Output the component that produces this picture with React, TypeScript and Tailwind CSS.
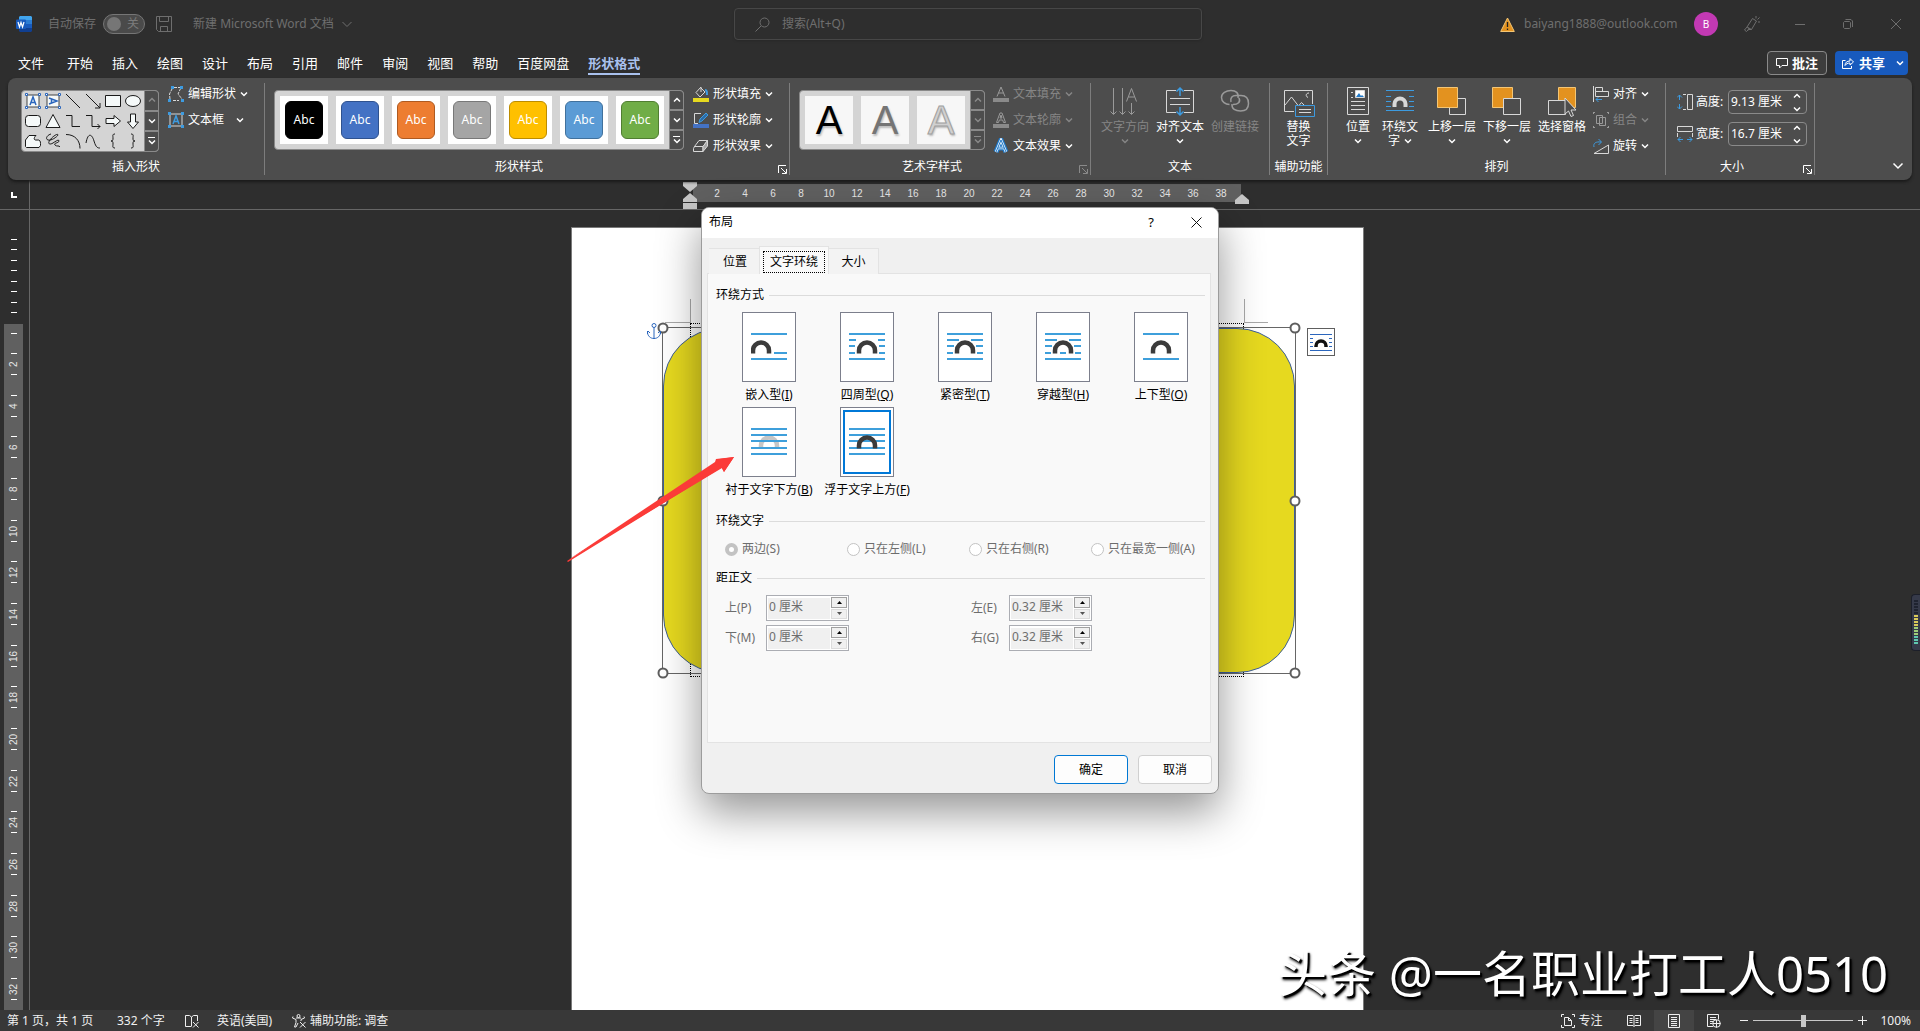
import type { ReactNode } from 'react';

const tabs = ['文件', '开始', '插入', '绘图', '设计', '布局', '引用', '邮件', '审阅', '视图', '帮助', '百度网盘', '形状格式'];

const styleColors = [
  'bg-black border-black',
  'bg-[#4472c4] border-[#2f528f]',
  'bg-[#ed7d31] border-[#ae5a21]',
  'bg-[#a5a5a5] border-[#787878]',
  'bg-[#ffc000] border-[#bc8c00]',
  'bg-[#5b9bd5] border-[#41719c]',
  'bg-[#70ad47] border-[#507e32]',
];

const shapes: { name: string; d: string; blue?: boolean; fill?: boolean }[] = [
  { name: '文本框', d: 'M2 2h12v12H2z', blue: true },
  { name: '竖排文本框', d: 'M2 2h12v12H2z', blue: true },
  { name: '直线', d: 'M1 1l14 14' },
  { name: '箭头', d: 'M1 1l14 14M15 10v5h-5' },
  { name: '矩形', d: 'M.5 2.5h15v11H.5z', fill: true },
  { name: '椭圆', d: 'M.5 8a7.5 5.5 0 0 1 15 0a7.5 5.5 0 0 1-15 0z', fill: true },
  { name: '圆角矩形', d: 'M3.5 2.5h9a3 3 0 0 1 3 3v5a3 3 0 0 1-3 3h-9a3 3 0 0 1-3-3v-5a3 3 0 0 1 3-3z', fill: true },
  { name: '三角形', d: 'M8 1.5l7 13H1z', fill: true },
  { name: '肘形连接符', d: 'M1 2.5h6v11h8' },
  { name: '肘形箭头', d: 'M1 2.5h6v11h8M12.5 11l2.5 2.5-2.5 2.5' },
  { name: '右箭头', d: 'M1 5.5h8V2.5l6.5 5.5L9 13.5v-3H1z', fill: true },
  { name: '下箭头', d: 'M5.5 1v8H2.5l5.5 6.5L13.5 9h-3V1z', fill: true },
  { name: '任意多边形', d: 'M4 2.5h7c-3 3-2 5 1 4.5 3-.5 3.500 1.500 3.500 3.500v2l-1.500 2H1.500l-1-1V7z', fill: true },
  { name: '自由曲线', d: 'M6 1C2 2 0 6 3 7s9-3 10-5c0-2-5 1-8 5s0 5 3 3 6-4 6-2-6 2-4 4 4 0 5 2' },
  { name: '弧形', d: 'M1 1.5c9 0 14 6 14 14' },
  { name: '曲线', d: 'M1 10c2-11 6-9 8-2s4 7 6 7' },
  { name: '左大括号', d: 'M10 1C7 1 8 3 8 5s0 3-2 3c2 0 2 1 2 3s-1 4 2 4' },
  { name: '右大括号', d: 'M6 1c3 0 2 2 2 4s0 3 2 3c-2 0-2 1-2 3s1 4-2 4' },
];

const wrapStyles = [
  { label: '嵌入型', hotkey: 'I', lines: 'M0 1h36M23 20h13M0 26h36', archX: 0 },
  { label: '四周型', hotkey: 'Q', lines: 'M0 1h36M0 7h7M29 7h7M0 13h6M30 13h6M0 20h6M30 20h6M0 26h36', archX: 8 },
  { label: '紧密型', hotkey: 'T', lines: 'M0 1h36M0 7h12M24 7h12M0 13h7M29 13h7M0 20h6M30 20h6M0 26h36', archX: 8 },
  { label: '穿越型', hotkey: 'H', lines: 'M0 1h36M0 7h12M24 7h12M0 13h7M29 13h7M0 20h6M15 20h6M30 20h6M0 26h36', archX: 8 },
  { label: '上下型', hotkey: 'O', lines: 'M0 1h36M0 26h36', archX: 8 },
  { label: '衬于文字下方', hotkey: 'B', lines: 'M0 1h36M0 7h36M0 13h36M0 20h36M0 26h36', archX: 8, behind: true },
  { label: '浮于文字上方', hotkey: 'F', lines: 'M0 1h36M0 7h36M0 13h36M0 20h36M0 26h36', archX: 8, selected: true },
];

function Chevron({ className = '' }: { className?: string }) {
  return (
    <svg className={`h-2 w-2 shrink-0 ${className}`} viewBox="0 0 8 8" fill="none" stroke="currentColor" strokeWidth="1.5">
      <path d="M1 2.5l3 3 3-3" />
    </svg>
  );
}

interface GroupProps {
  label: string;
  width: string;
  pad?: string;
  launcher?: boolean;
  dim?: boolean;
  children: ReactNode;
}

function Group({ label, width, pad = '', launcher, dim, children }: GroupProps) {
  return (
    <section className={`flex shrink-0 flex-col border-r border-[#7d7d7d] ${width}`}>
      <div className={`flex h-[76px] ${pad}`}>{children}</div>
      <div className="flex h-4 items-center">
        <h2 className="flex-1 whitespace-nowrap text-center leading-4">{label}</h2>
        {launcher && (
          <button aria-label={`${label}设置`} className={`flex w-4 justify-end pr-0.5 ${dim ? 'text-[#8a8a8a]' : 'text-white'}`}>
            <svg className="mt-1 h-[9px] w-[9px]" viewBox="0 0 9 9" fill="none" stroke="currentColor">
              <path d="M.5 8V.5H8M3 3l5 5M8.500 4v4.500H4" />
            </svg>
          </button>
        )}
      </div>
    </section>
  );
}

function Command({ label, icon, dim, wide }: { label: string; icon: ReactNode; dim?: boolean; wide?: boolean }) {
  return (
    <button className={`flex h-[22px] items-center gap-1 whitespace-nowrap ${dim ? 'text-[#868686]' : 'text-white'}`}>
      <svg className="h-4 w-4 shrink-0" viewBox="0 0 16 16" fill="none" stroke="#d8d8d8">
        {icon}
      </svg>
      <span>{label}</span>
      <Chevron className={wide ? 'ml-2' : ''} />
    </button>
  );
}

function BigButton({ lines, icon, dim, chevron, width = 'w-12' }: { lines: string[]; icon: ReactNode; dim?: boolean; chevron?: boolean; width?: string }) {
  return (
    <button className={`flex shrink-0 flex-col items-center pt-1 leading-[14px] ${width} ${dim ? 'text-[#868686]' : 'text-white'}`}>
      <svg className="mb-[3px] h-[30px] w-8" viewBox="0 0 32 30" fill="none" stroke="#d8d8d8">
        {icon}
      </svg>
      <span className="whitespace-nowrap">{lines[0]}</span>
      <span className="flex h-[14px] items-center gap-1">
        {lines[1]}
        {chevron && <Chevron />}
      </span>
    </button>
  );
}

function GalleryScroll({ dimUp, dimAll }: { dimUp?: boolean; dimAll?: boolean }) {
  const dim = 'text-[#8a8a8a]';
  return (
    <div className="flex w-[14px] shrink-0 flex-col divide-y-2 divide-[#8a8a8a] border-l border-[#8a8a8a] bg-[#4d4d4d]">
      <button aria-label="上一行" className={`flex flex-1 items-center justify-center ${dimUp || dimAll ? dim : 'text-white'}`}>
        <Chevron className="rotate-180" />
      </button>
      <button aria-label="下一行" className={`flex flex-1 items-center justify-center ${dimAll ? dim : 'text-white'}`}>
        <Chevron />
      </button>
      <button aria-label="其他" className={`flex flex-1 flex-col items-center justify-center ${dimAll ? dim : 'text-white'}`}>
        <span className="h-px w-[7px] bg-current" />
        <Chevron />
      </button>
    </div>
  );
}

function TitleBar() {
  return (
    <header className="flex h-12 items-center pl-4 text-[#6e6e6e]">
      <div className="flex flex-1 items-center">
        <svg className="h-4 w-4" viewBox="0 0 16 16">
          <path fill="#41a5ee" d="M4 0h11l1 1v3H3V1z" />
          <path fill="#2b7cd3" d="M3 4h13v4H3z" />
          <path fill="#185abd" d="M3 8h13v4H3z" />
          <path fill="#103f91" d="M3 12h13v3l-1 1H4l-1-1z" />
          <rect y="3.5" width="10" height="9.5" rx="1" fill="#185abd" />
          <path d="M2 6l1.500 5L5 6.500 6.500 11 8 6" fill="none" stroke="#fff" strokeWidth="1.2" />
        </svg>
        <span className="ml-4">自动保存</span>
        <button role="switch" aria-checked="false" className="ml-[7px] flex h-5 w-[42px] items-center justify-between rounded-full border border-[#767676] bg-[#4a4a4a] pr-[5px] pl-[3px]">
          <span className="h-3.5 w-3.5 rounded-full bg-[#767676]" />
          <span className="text-[#7c7c7c]">关</span>
        </button>
        <button aria-label="保存" className="ml-[11px]">
          <svg className="h-4 w-4" viewBox="0 0 16 16" fill="none" stroke="currentColor">
            <path d="M.5 .5h15v15h-13l-2-2zM3.500 .5v5h9v-5M4.500 15.500v-5h7v5" />
          </svg>
        </button>
        <button className="ml-[21px] flex items-center gap-1 whitespace-nowrap">
          新建 Microsoft Word 文档
          <svg className="ml-1 h-2 w-[10px]" viewBox="0 0 10 8" fill="none" stroke="currentColor">
            <path d="M.5 2l4.500 4.500L9.500 2" />
          </svg>
        </button>
      </div>
      <label className="flex h-8 w-[468px] items-center gap-3 rounded border border-[#474747] pl-5 shadow">
        <svg className="h-[15px] w-[15px] shrink-0" viewBox="0 0 15 15" fill="none" stroke="currentColor">
          <circle cx="9.5" cy="5.5" r="4.5" />
          <path d="M6 9L.5 14.500" />
        </svg>
        <input aria-label="搜索" placeholder="搜索(Alt+Q)" className="w-full bg-transparent outline-none placeholder:text-[#6e6e6e]" />
      </label>
      <div className="flex flex-1 items-center justify-end">
        <svg className="h-[15px] w-[15px]" viewBox="0 0 15 15">
          <path d="M7.500 1L14.300 14.500H.7z" fill="#e3921f" stroke="#f4c675" />
          <path d="M7.500 5v5M7.500 11.500v1.500" stroke="#222" strokeWidth="1.3" />
        </svg>
        <span className="ml-[9px] w-[159px]">baiyang1888@outlook.com</span>
        <button className="mr-[10px] ml-[11px] flex h-6 w-6 items-center justify-center rounded-full bg-[#c239b3] text-[10px] text-white">B</button>
        <button aria-label="笔" className="flex w-12 justify-center">
          <svg className="h-4 w-4" viewBox="0 0 16 16" fill="none" stroke="currentColor">
            <path d="M8.500 2.500l4 2.500-5 8.500H4.500l-2 2-2-1.500L3 11zM3 11l4.500 2.500M5 12l-1.500 3M12 0v2.500M15.500 1.500L13.500 3.500M16 6h-2" />
          </svg>
        </button>
        <button aria-label="最小化" className="flex w-12 justify-center">
          <span className="h-px w-[10px] bg-current" />
        </button>
        <button aria-label="还原" className="flex w-12 justify-center">
          <svg className="h-[10px] w-[10px]" viewBox="0 0 10 10" fill="none" stroke="currentColor">
            <path d="M1.500 2.500h5l1 1v5l-1 1h-5l-1-1v-5zM2.500 .5h5.500l1.500 1.500v6" />
          </svg>
        </button>
        <button aria-label="关闭" className="flex w-12 justify-center">
          <svg className="h-[10px] w-[10px]" viewBox="0 0 10 10" fill="none" stroke="currentColor">
            <path d="M0 0l10 10M10 0L0 10" />
          </svg>
        </button>
      </div>
    </header>
  );
}

function TabBar() {
  return (
    <nav className="flex h-[30px] items-start pr-3 pl-[18px] text-[13px] text-white">
      <div className="flex flex-1 gap-[19px] pt-1">
        {tabs.map((tab, i) => (
          <button
            key={tab}
            className={`h-[23px] whitespace-nowrap border-b-2 ${i === 0 ? 'mr-1' : ''} ${
              i === tabs.length - 1 ? 'border-[#a9c1ee] font-bold text-[#a9c1ee]' : 'border-transparent'
            }`}
          >
            {tab}
          </button>
        ))}
      </div>
      <button className="mt-[3px] flex h-6 w-[60px] items-center justify-center gap-1 rounded border border-[#8a8a8a] bg-[#3d3d3d] font-bold">
        <svg className="h-3 w-3" viewBox="0 0 12 12" fill="none" stroke="currentColor">
          <path d="M.5 1.500h11v7H6l-2.500 2.500V8.500h-3z" />
        </svg>
        批注
      </button>
      <button className="mt-[3px] ml-2 flex h-6 w-[73px] items-center rounded bg-[#185abd] pl-[7px] font-bold">
        <svg className="mr-[5px] h-3 w-3" viewBox="0 0 12 12" fill="none" stroke="currentColor">
          <path d="M3.500 3.500h-3v8h9V9M3 8.500c0-3 2-4.500 5-4.500V1.500L11.500 5 8 8V6C5.500 6 4 7 3 8.500z" />
        </svg>
        共享
        <Chevron className="ml-[11px]" />
      </button>
    </nav>
  );
}

function SizeField({ id, label, value, icon }: { id: string; label: string; value: string; icon: ReactNode }) {
  return (
    <div className="flex h-6 items-center">
      <label htmlFor={id} className="flex w-[51px] items-center gap-[3px] whitespace-nowrap">
        <svg className="h-4 w-4 shrink-0" viewBox="0 0 16 16" fill="none" stroke="#d8d8d8">
          {icon}
        </svg>
        {label}
      </label>
      <div className="flex h-6 w-[79px] items-center rounded border border-[#8a8a8a] pr-[5px] pl-[2px]">
        <input id={id} defaultValue={value} className="w-full min-w-0 bg-transparent outline-none" />
        <div className="flex flex-col gap-[5px]">
          <button aria-label="增加">
            <Chevron className="rotate-180" />
          </button>
          <button aria-label="减少">
            <Chevron />
          </button>
        </div>
      </div>
    </div>
  );
}

function Ribbon() {
  return (
    <div className="relative z-10 mx-2 flex h-[102px] rounded-lg bg-[#4d4d4d] py-[5px] text-white shadow-[0_2px_3px_#1a1a1a]">
      <Group label="插入形状" width="w-[257px]" pad="pl-[13px]">
        <div className="mt-[7px] flex h-[62px] w-[138px] overflow-hidden rounded border border-[#8a8a8a] bg-[#d4d4d4]">
          <div className="grid flex-1 grid-cols-[repeat(6,20px)] content-start pl-px">
            {shapes.map((s) => (
              <button key={s.name} aria-label={s.name} className="flex h-5 w-5 items-center justify-center">
                <svg className="h-4 w-4" viewBox="0 0 16 16" fill={s.fill || s.blue ? '#f5f9f9' : 'none'} stroke={s.blue ? '#444' : '#1a1a1a'}>
                  <path d={s.d} />
                  {s.blue && (
                    <g stroke="#2b66bd">
                      <path fill="#fff" d="M.5 .5h2v2h-2zM13.500 .5h2v2h-2zM.5 13.500h2v2h-2zM13.500 13.500h2v2h-2z" />
                      <path
                        fill="none"
                        strokeWidth="1.5"
                        d={s.name === '文本框' ? 'M5 12l3-8 3 8M6 9.500h4' : 'M4 5l8 3-8 3M6.500 6v4'}
                      />
                    </g>
                  )}
                </svg>
              </button>
            ))}
          </div>
          <GalleryScroll dimUp />
        </div>
        <div className="ml-[9px] flex flex-col gap-1">
          <Command
            label="编辑形状"
            icon={
              <>
                <path d="M2 13L1.500 8 4 3M6 1.500h7L10 8l4 5M5 14.500h6" strokeDasharray="3 1" />
                <path d="M3 0h3v3H3zM12 0h3v3h-3zM0 13h3v3H0zM13 13h3v3h-3z" fill="#3d9be0" stroke="none" />
              </>
            }
          />
          <Command
            label="文本框"
            wide
            icon={
              <>
                <path d="M2 2h12v12H2z" />
                <path d="M5 12l3-8 3 8M6 9.500h4" stroke="#3d9be0" strokeWidth="1.5" />
                <path d="M0 0h3v3H0zM13 0h3v3h-3zM0 13h3v3H0zM13 13h3v3h-3z" fill="#3d9be0" stroke="none" />
              </>
            }
          />
        </div>
      </Group>

      <Group label="形状样式" width="w-[525px]" pad="pl-[9px]" launcher>
        <div className="mt-[7px] flex h-[60px] w-[410px] overflow-hidden rounded border border-[#8a8a8a] bg-[#d4d4d4]">
          <div className="flex flex-1 items-center gap-2 pl-[5px]">
            {styleColors.map((c) => (
              <button key={c} className="flex h-12 w-12 items-center justify-center bg-white">
                <span className={`flex h-[38px] w-[38px] items-center justify-center rounded-md border text-white ${c}`}>Abc</span>
              </button>
            ))}
          </div>
          <GalleryScroll />
        </div>
        <div className="ml-[9px] flex flex-col gap-1">
          <Command
            label="形状填充"
            icon={
              <>
                <path d="M8 1L3 6.500 7 11l5-5-4-4M8 1v5" />
                <path d="M12 4c2 0 2 2 2 5" stroke="#3d9be0" strokeWidth="2" />
                <path d="M0 12h16v4H0z" fill="#e6d91f" stroke="none" />
              </>
            }
          />
          <Command
            label="形状轮廓"
            icon={
              <>
                <path d="M8 1.500H1.500v10H5" />
                <path d="M6 10.500l1-3.500 6-6 2 2-6 6z" fill="#2b6ca8" stroke="#3d9be0" />
                <path d="M0 12h16v4H0z" fill="#4472c4" stroke="none" />
              </>
            }
          />
          <Command
            label="形状效果"
            icon={
              <>
                <path d="M6 2.500h8.500L10 8.500H1.500z" />
                <path d="M1.500 8.500H10v5H.5v-3z" />
                <path d="M10 8.500l4.500-6V8L10 13.500z" fill="#a8a8a8" />
              </>
            }
          />
        </div>
      </Group>

      <Group label="艺术字样式" width="w-[301px]" pad="pl-[9px]" launcher dim>
        <div className="mt-[7px] flex h-[60px] w-[186px] overflow-hidden rounded border border-[#8a8a8a] bg-[#d4d4d4]">
          <div className="flex flex-1 items-center gap-2 pl-[5px]">
            {['text-black', 'text-[#757575]', 'text-[#d0d0d0] [-webkit-text-stroke:1px_#a0a0a0]'].map((c) => (
              <button key={c} className="flex h-12 w-12 items-center justify-center bg-[#f7f7f7]">
                <span className={`font-['Liberation_Sans'] text-[40px] leading-none [text-shadow:1px_2px_2px_#bbb] ${c}`}>A</span>
              </button>
            ))}
          </div>
          <GalleryScroll dimAll />
        </div>
        <div className="ml-2 flex flex-col gap-1">
          <Command
            label="文本填充"
            dim
            icon={
              <>
                <path d="M4 10.500L8 1l4 9.500M5.500 7h5" stroke="#9a9a9a" />
                <path d="M0 12h16v4H0z" fill="#8a8a8a" stroke="none" />
              </>
            }
          />
          <Command
            label="文本轮廓"
            dim
            icon={
              <>
                <path d="M3.500 10.500L7 1h2l3.500 9.500h-2l-.8-2.500H6.300l-.8 2.500zM7 6l1-3 1 3z" stroke="#9a9a9a" />
                <path d="M0 12h16v4H0z" fill="#8a8a8a" stroke="none" />
              </>
            }
          />
          <Command
            label="文本效果"
            icon={
              <>
                <path d="M3 14L8 2l5 12M5 10h6" stroke="#1f78c8" strokeWidth="5" />
                <path d="M3 14L8 2l5 12M5 10h6" stroke="#e8f2fb" strokeWidth="2.5" />
                <path d="M3 14L8 2l5 12M5 10h6" stroke="#1f78c8" />
              </>
            }
          />
        </div>
      </Group>

      <Group label="文本" width="w-[179px]" pad="gap-[7px] pl-[10px]">
        <BigButton
          lines={['文字方向']}
          dim
          chevron
          icon={
            <path
              d="M4.500 1v26M1.500 24.500l3 3 3-3M13.500 1v26M10.500 24.500l3 3 3-3M22.500 16v11M19.500 24.500l3 3 3-3M17.500 14.500l5-13 5 13M19.500 10h6"
              stroke="#9a9a9a"
            />
          }
        />
        <BigButton
          lines={['对齐文本']}
          chevron
          icon={
            <>
              <path d="M12 3.500H2.500v22H12M20 3.500h9.500v22H20M6 11.500h20M6 17.500h20" />
              <path d="M16 9V1M12.500 4.500L16 1l3.500 3.500M16 20v8M12.500 24.500L16 28l3.500-3.500" stroke="#3d9be0" strokeWidth="1.5" />
            </>
          }
        />
        <BigButton
          lines={['创建链接']}
          dim
          icon={
            <path
              d="M19 11c1-5-2-7.500-7-7.500S2.500 6 2.500 10.500s4 7 8 7M12 15c-1-4 1-6.500 5-6.500h5c5 0 7.500 3 7.500 8s-3 7.500-8 7.500-9-2-8.500-7M20 11c2 4-1 6.500-6 6.500"
              stroke="#9a9a9a"
              strokeWidth="1.5"
            />
          }
        />
      </Group>

      <Group label="辅助功能" width="w-[58px]" pad="justify-center">
        <BigButton
          lines={['替换', '文字']}
          icon={
            <>
              <path d="M11 24.500H1.500v-21h28V17M2 18l6.500-8 7 9 3-3.500L24 21" />
              <path d="M26 6c-3 0-4 3-1 4.500" />
              <path d="M12.500 18.500h19v11h-19z" fill="#4d4d4d" stroke="#3d9be0" />
              <path d="M16 22.500h12M16 25.500h12" />
            </>
          }
        />
      </Group>

      <Group label="排列" width="w-[338px]" pad="gap-[7px] pl-4">
        <BigButton
          lines={['位置']}
          chevron
          width="w-7"
          icon={
            <>
              <path d="M5.500 .5h21v27h-21z" />
              <path d="M9 5.500h2M9 10.500h2M9 14.500h14M9 18.500h14M9 22.500h14" />
              <path d="M13.500 3.500h9v7h-9z" fill="#fff" />
              <path d="M14 10l3-4 2 3 1-1 2 2z" fill="#1f78c8" stroke="none" />
            </>
          }
        />
        <BigButton
          lines={['环绕文', '字']}
          chevron
          width="w-[42px]"
          icon={
            <>
              <path d="M2 3.500h28M2 9.500h5M25 9.500h5M2 14.500h5M25 14.500h5M2 19.500h5M25 19.500h5M2 23.500h28" stroke="#3d9be0" />
              <path d="M10.500 20v-3a5.500 5.500 0 0 1 11 0v3" strokeWidth="4" />
            </>
          }
        />
        <BigButton
          lines={['上移一层']}
          chevron
          icon={
            <>
              <path d="M13.500 11.500h16v16h-16z" />
              <path d="M1.500 .5h20v20h-20z" fill="#e3921f" stroke="#f4c675" />
            </>
          }
        />
        <BigButton
          lines={['下移一层']}
          chevron
          icon={
            <>
              <path d="M1.500 .5h20v20h-20z" fill="#e3921f" stroke="#f4c675" />
              <path d="M12.500 11.500h17v16h-17z" fill="#4d4d4d" />
            </>
          }
        />
        <BigButton
          lines={['选择窗格']}
          icon={
            <>
              <path d="M12.500 .5h17v20h-17z" fill="#e3921f" stroke="#f4c675" />
              <path d="M2.500 13.500h17v14h-17z" fill="#4d4d4d" />
              <path d="M19 11v16l3.500-3 2.500 5.500 2.500-1-2.500-5.500h5z" fill="#4d4d4d" />
            </>
          }
        />
        <div className="flex flex-col gap-1">
          <Command
            label="对齐"
            icon={
              <>
                <path d="M.5 0v16M2.500 1.500h7v4h-7zM2.500 5.500h13v5h-13z" />
                <path d="M9 13.500H3M5.500 11L3 13.500 5.500 16" stroke="#3d9be0" />
              </>
            }
          />
          <Command
            label="组合"
            dim
            icon={
              <g stroke="#9a9a9a">
                <path d="M3.500 3.500h6v8h-6zM6.500 5.500h6v8h-6z" />
                <path d="M0 .5h2M.5 0v2M14 .5h2M15.500 0v2M0 15.500h2M.5 14v2M14 15.500h2M15.500 14v2" />
              </g>
            }
          />
          <Command
            label="旋转"
            icon={
              <>
                <path d="M1 15.500h14.500V7z" />
                <path d="M1 9C0 5 3 3.500 8 4M5.500 1L8.500 4l-3 3" stroke="#3d9be0" />
              </>
            }
          />
        </div>
      </Group>

      <Group label="大小" width="w-[149px]" pad="pl-[11px]" launcher>
        <div className="mt-[7px] flex flex-col gap-2">
          <SizeField
            id="shape-height"
            label="高度:"
            value="9.13 厘米"
            icon={
              <>
                <path d="M6 .5h3M6 15.500h3M10.500 .5h5v15h-5z" />
                <path d="M2.500 1v5M2.500 10v5M0 3.500L2.500 1 5 3.500M0 12.500L2.500 15 5 12.500" stroke="#3d9be0" />
              </>
            }
          />
          <SizeField
            id="shape-width"
            label="宽度:"
            value="16.7 厘米"
            icon={
              <>
                <path d="M.5 .5h15v5H.5zM.5 7v4M15.500 7v4" />
                <path d="M1 13.500h5M10 13.500h5M3.500 11L1 13.500 3.500 16M12.500 11l2.500 2.500-2.500 2.500" stroke="#3d9be0" />
              </>
            }
          />
        </div>
      </Group>

      <div className="flex flex-1 items-end justify-end pr-2 pb-1">
        <button aria-label="折叠功能区">
          <svg className="h-[10px] w-3" viewBox="0 0 12 10" fill="none" stroke="currentColor" strokeWidth="1.5">
            <path d="M1.500 2.500L6 7l4.500-4.500" />
          </svg>
        </button>
      </div>
    </div>
  );
}

function HorizontalRuler() {
  return (
    <div className="flex h-[30px] border-b border-[#666]">
      <div className="flex w-[30px] items-start border-r border-[#666] pt-3 pl-[11px]">
        <span className="h-[6px] w-[6px] border-b-2 border-l-2 border-white" />
      </div>
      <div className="flex flex-1 justify-center pr-4">
        <div className="relative mt-1 h-[18px] w-[548px] bg-[#606060]">
          <div className="flex pl-[10px] font-['Liberation_Sans'] text-[10px] leading-5 text-[#e6e6e6]">
            {Array.from({ length: 19 }, (_, i) => (
              <span key={i} className="w-7 text-center">{(i + 1) * 2}</span>
            ))}
          </div>
          <svg className="absolute -top-0.5 -left-[10px] h-[27px] w-[14px]" viewBox="0 0 14 27" fill="#c6c6c6">
            <path d="M0 0h14v4L7 10 0 4zM7 11l7 6v3H0v-3zM0 21h14v6H0z" />
          </svg>
          <svg className="absolute -right-2 top-[10px] h-[10px] w-[14px]" viewBox="0 0 14 10" fill="#c6c6c6">
            <path d="M7 0l7 6v4H0V6z" />
          </svg>
        </div>
      </div>
    </div>
  );
}

function VerticalRuler() {
  return (
    <div className="flex w-[30px] flex-col border-r border-[#666] pl-1">
      <div className="flex h-[114px] w-[19px] flex-col items-center justify-between pt-[29px] pb-[11px]">
        {Array.from({ length: 8 }, (_, i) => (
          <span key={i} className="h-px w-[6px] bg-white" />
        ))}
      </div>
      <div className="flex w-[19px] flex-1 flex-col items-center bg-[#606060]">
        <span className="mt-[9px] mb-[9px] h-px w-[6px] bg-white" />
        {Array.from({ length: 16 }, (_, i) => (
          <div key={i} className="flex flex-1 flex-col items-center justify-center gap-1">
            <span className="h-px w-[6px] shrink-0 bg-white" />
            <span className="h-3 rotate-180 text-center font-['Liberation_Sans'] text-[10px] leading-3 text-[#e6e6e6] [writing-mode:vertical-rl]">
              {(i + 1) * 2}
            </span>
            <span className="h-px w-[6px] shrink-0 bg-white" />
          </div>
        ))}
      </div>
    </div>
  );
}

const handles = [
  'left-0 top-0',
  'left-full top-0',
  'left-0 top-1/2',
  'left-full top-1/2',
  'left-0 top-full',
  'left-full top-full',
];

function Page() {
  return (
    <div className="relative w-[793px] border border-b-0 border-[#7a7a7a] bg-white">
      {/* margin marks and the text area behind the shape */}
      <span className="absolute left-[93px] top-[71px] h-6 w-[26px] border-r border-b border-[#a8a8a8]" />
      <span className="absolute left-[672px] top-[71px] h-6 w-6 border-b border-l border-[#a8a8a8]" />
      <span className="absolute left-[118px] top-[95px] h-[354px] w-[554px] border border-dotted border-black" />
      <div className="absolute left-[90px] top-[99px] h-[347px] w-[634px] border border-[#666]">
        <div className="h-full w-full rounded-[58px] border border-[#3d5f9a] bg-[#e6d91f]" />
        {handles.map((pos) => (
          <span key={pos} className={`absolute h-[11px] w-[11px] -translate-x-1/2 -translate-y-1/2 rounded-full border-2 border-[#5e5e5e] bg-white ${pos}`} />
        ))}
      </div>
      <svg className="absolute left-[75px] top-[95px] h-4 w-[14px]" viewBox="0 0 14 16" fill="none" stroke="#2b66bd">
        <circle cx="7" cy="2.5" r="2" />
        <path d="M7 4.500v11M.5 11V8M13.500 11V8M.5 9c0 4 3 6.500 6.500 6.500S13.500 13 13.500 9M0 10l1-2 2 2M14 10l-1-2-2 2" />
      </svg>
      <button aria-label="布局选项" className="absolute left-[735px] top-[100px] flex h-7 w-7 items-center justify-center border border-[#5e5e5e] bg-white">
        <svg className="h-[18px] w-[22px]" viewBox="0 0 22 18" fill="none">
          <path d="M0 1.500h22M0 5.500h3M19 5.500h3M0 9.500h3M19 9.500h3M0 13.500h3M19 13.500h3M0 17.500h22" stroke="#2b66bd" />
          <path d="M6 14v-1a5 5 0 0 1 10 0v1" stroke="#111" strokeWidth="3.5" />
        </svg>
      </button>
    </div>
  );
}

function SectionTitle({ children }: { children: ReactNode }) {
  return (
    <h3 className="flex h-4 items-center gap-[5px] pr-[5px] pl-2 leading-4 text-black">
      {children}
      <span className="h-px flex-1 bg-[#dcdcdc]" />
    </h3>
  );
}

function Spinner({ id, value }: { id: string; value: string }) {
  return (
    <div className="flex h-[26px] w-[83px] border border-[#abadb3] bg-white p-px">
      <input id={id} value={value} disabled className="mt-px w-[62px] bg-[#f0f0f0] pb-1 pl-px text-[#6d6d6d]" />
      <div className="ml-px flex w-4 flex-col gap-px">
        <button aria-label="增加" className="flex flex-1 items-center justify-center border border-[#a0a0a0] bg-[#f0f0f0]">
          <svg className="h-[3px] w-[5px]" viewBox="0 0 5 3"><path d="M2.500 0L5 3H0z" /></svg>
        </button>
        <button aria-label="减少" className="flex flex-1 items-center justify-center border border-[#dcdcdc] bg-[#f0f0f0]">
          <svg className="h-[3px] w-[5px]" viewBox="0 0 5 3"><path d="M0 0h5L2.500 3z" fill="#555" /></svg>
        </button>
      </div>
    </div>
  );
}

function LayoutDialog() {
  return (
    <div
      role="dialog"
      aria-label="布局"
      className="absolute left-1/2 top-[207px] z-20 w-[518px] -translate-x-1/2 overflow-hidden rounded-lg border border-[#9c9c9c] bg-[#f0f0f0] text-black shadow-[0_18px_44px_rgba(0,0,0,0.42)]"
    >
      <div className="flex h-[30px] items-center bg-white pr-4 pb-0.5 pl-[7px]">
        <span className="flex-1">布局</span>
        <button aria-label="帮助" className="mr-[37px] text-[13px]">?</button>
        <button aria-label="关闭">
          <svg className="h-[11px] w-[11px]" viewBox="0 0 11 11" fill="none" stroke="#111">
            <path d="M.5 .5l10 10M10.500 .5l-10 10" />
          </svg>
        </button>
      </div>

      <div className="flex items-end pt-2 pl-[7px]">
        <button className="h-[26px] w-[50px] border-t border-[#e3e3e3] bg-[#f3f3f3] pl-[14px] text-left">位置</button>
        <button className="relative z-10 h-7 w-[70px] border border-b-0 border-[#e3e3e3] bg-[#f9f9f9] p-[3px] pb-px">
          <span className="flex h-[22px] items-center justify-center border border-dotted border-black">文字环绕</span>
        </button>
        <button className="h-[26px] w-[50px] border-t border-r border-[#e3e3e3] bg-[#f3f3f3]">大小</button>
      </div>
      <div className="-mt-px mr-[7px] ml-[5px] h-[470px] border border-[#e3e3e3] bg-[#f9f9f9] pt-[13px]">
        <SectionTitle>环绕方式</SectionTitle>
        <div className="mt-[9px] ml-[17px] grid grid-cols-[repeat(5,88px)] gap-x-[10px] gap-y-1">
          {wrapStyles.map((w) => (
            <button key={w.hotkey} className="flex flex-col items-center whitespace-nowrap leading-4">
              <span className="relative mb-[5px] flex h-[70px] w-[54px] items-center justify-center border border-[#7c7f8c] bg-white">
                <svg className="h-7 w-9" viewBox="0 0 36 28" fill="none">
                  {w.behind && <path d="M10 20.500v-3a8 8 0 0 1 16 0v3" stroke="#c6c6c6" strokeWidth="4.5" />}
                  <path d={w.lines} stroke="#3e9fdb" strokeWidth="1.8" />
                  {!w.behind && (
                    <path d="M2 20.500v-3a8 8 0 0 1 16 0v3" transform={`translate(${w.archX} 0)`} stroke="#3b3b3b" strokeWidth="4.5" />
                  )}
                </svg>
                {w.selected && <span className="absolute inset-[2px] border-2 border-[#0078d7]" />}
              </span>
              <span>
                {w.label}(<u>{w.hotkey}</u>)
              </span>
            </button>
          ))}
        </div>

        <div className="mt-[15px]">
          <SectionTitle>环绕文字</SectionTitle>
        </div>
        <div className="mt-3 ml-[17px] grid grid-cols-[repeat(4,112px)] gap-[10px] text-[#6d6d6d]">
          {['两边(S)', '只在左侧(L)', '只在右侧(R)', '只在最宽一侧(A)'].map((t, i) => (
            <label key={t} className="flex h-4 items-center gap-1 whitespace-nowrap leading-4">
              <input
                type="radio"
                name="wrap-side"
                disabled
                defaultChecked={i === 0}
                className="h-[13px] w-[13px] appearance-none rounded-full border border-[#c3c3c3] bg-white checked:border-4"
              />
              {t}
            </label>
          ))}
        </div>

        <div className="mt-[13px]">
          <SectionTitle>距正文</SectionTitle>
        </div>
        <div className="mt-[9px] ml-[17px] grid grid-cols-[41px_205px_38px_83px] items-center gap-y-1 text-[#6d6d6d]">
          <label htmlFor="dist-top">上(P)</label>
          <Spinner id="dist-top" value="0 厘米" />
          <label htmlFor="dist-left">左(E)</label>
          <Spinner id="dist-left" value="0.32 厘米" />
          <label htmlFor="dist-bottom">下(M)</label>
          <Spinner id="dist-bottom" value="0 厘米" />
          <label htmlFor="dist-right">右(G)</label>
          <Spinner id="dist-right" value="0.32 厘米" />
        </div>
      </div>

      <div className="flex justify-end gap-[10px] pt-3 pr-[6px] pb-[9px]">
        <button className="h-[29px] w-[74px] rounded border border-[#0078d4] bg-[#fdfdfd]">确定</button>
        <button className="h-[29px] w-[74px] rounded border border-[#d0d0d0] bg-[#fdfdfd]">取消</button>
      </div>
    </div>
  );
}

function StatusBar() {
  return (
    <footer className="flex h-[21px] items-center whitespace-nowrap bg-[#383838] pr-[9px] pl-[7px] text-[#f0f0f0]">
      <button className="w-[110px] text-left">第 1 页，共 1 页</button>
      <button className="w-[68px] text-left">332 个字</button>
      <button aria-label="校对" className="w-8">
        <svg className="h-[14px] w-[14px]" viewBox="0 0 14 14" fill="none" stroke="currentColor">
          <path d="M6.500 12.500h-6v-11h4l2 1.500 2-1.500h4V7M6.500 3v9M8 8l5.500 5.500M13.500 8L8 13.500" />
        </svg>
      </button>
      <button className="w-[75px] text-left">英语(美国)</button>
      <button className="flex items-center gap-1">
        <svg className="h-[14px] w-[14px]" viewBox="0 0 14 14" fill="none" stroke="currentColor">
          <circle cx="6.5" cy="2" r="1.5" />
          <path d="M1 2.500l-.5 1.500L4 5.500v3L2.500 13h1.500l2-4M12 2.500l.5 1.500L9 5.500V7M8 8l5.500 5.500M13.500 8L8 13.500M4 4h5" />
        </svg>
        辅助功能: 调查
      </button>
      <div className="flex-1" />
      <button className="flex items-center gap-[3px]">
        <svg className="h-[14px] w-[14px]" viewBox="0 0 14 14" fill="none" stroke="currentColor">
          <path d="M3 .5H.5V3M11 .5h2.500V3M3 13.500H.5V11M11 13.500h2.500V11M3.500 3.500h4l3 3v5h-7zM7.500 3.500v3h3" />
        </svg>
        专注
      </button>
      <button aria-label="阅读视图" className="ml-3 flex h-[21px] w-10 items-center justify-center">
        <svg className="h-[14px] w-[14px]" viewBox="0 0 14 14" fill="none" stroke="currentColor">
          <path d="M.5 1.500H6l1 1 1-1h5.500v10H8l-1 1-1-1H.5zM7 2.500v10M2.500 4.500h3M2.500 6.500h3M2.500 8.500h3M8.500 4.500h3M8.500 6.500h3M8.500 8.500h3" />
        </svg>
      </button>
      <button aria-label="页面视图" className="flex h-[21px] w-10 items-center justify-center bg-[#444]">
        <svg className="h-[14px] w-3" viewBox="0 0 12 14" fill="none" stroke="currentColor">
          <path d="M.5 .5h11v13H.5zM3 3.500h6M3 5.500h6M3 7.500h6M3 9.500h6M3 11.500h6" />
        </svg>
      </button>
      <button aria-label="Web 版式视图" className="flex h-[21px] w-10 items-center justify-center">
        <svg className="h-[14px] w-[14px]" viewBox="0 0 14 14" fill="none" stroke="currentColor">
          <path d="M6 12.500H.5V.5h11v5M3 3.500h6M3 5.500h6M3 7.500h3M3 9.500h2" />
          <circle cx="9.5" cy="9.5" r="3.8" />
          <path d="M5.500 9.500h8M9.500 6v7.500" />
        </svg>
      </button>
      <button aria-label="缩小" className="ml-[6px] w-2">
        <span className="block h-px w-2 bg-current" />
      </button>
      <input
        type="range"
        aria-label="缩放"
        min={0}
        max={200}
        defaultValue={100}
        className="mx-[5px] h-[13px] w-[100px] appearance-none bg-[linear-gradient(#c8c8c8,#c8c8c8)] bg-[length:100%_1px] bg-center bg-no-repeat [&::-webkit-slider-thumb]:h-3 [&::-webkit-slider-thumb]:w-[5px] [&::-webkit-slider-thumb]:appearance-none [&::-webkit-slider-thumb]:bg-[#c8c8c8]"
      />
      <button aria-label="放大">
        <svg className="h-[9px] w-[9px]" viewBox="0 0 9 9" stroke="currentColor"><path d="M4.500 0v9M0 4.500h9" /></svg>
      </button>
      <span className="ml-[13px] text-right">100%</span>
    </footer>
  );
}

export default function App() {
  return (
    <div className="relative flex h-screen flex-col overflow-hidden bg-[#2e2e2e] font-['Noto_Sans','Noto_Sans_CJK_SC',sans-serif] text-[12px] leading-4">
      <TitleBar />
      <TabBar />
      <Ribbon />
      <HorizontalRuler />
      <main className="flex min-h-0 flex-1">
        <VerticalRuler />
        <div className="flex flex-1 justify-center pt-[17px] pr-4">
          <Page />
        </div>
      </main>
      <StatusBar />

      <LayoutDialog />
      <svg className="absolute left-1/2 top-[455px] z-30 -ml-[393px] h-[108px] w-[168px]" viewBox="0 0 168 108" fill="#fb3b38">
        <path d="M0 106L149 9.500 149 4.500 167 2 157 17 154.500 12.500 1 107z" />
        <path d="M1 105L148 7 149 4 167 2 157 17 155 13z" />
      </svg>
      <div className="absolute right-0 top-[594px] h-[57px] w-[9px] rounded-l border border-r-0 border-[#1c1f2a] bg-[#363a4a] pt-[5px] pl-[2px]">
        <div className="flex flex-col gap-px">
          {Array.from({ length: 15 }, (_, i) => (
            <span key={i} className={`h-0.5 w-1 ${i < 5 ? 'bg-[#1f2330]' : i < 9 ? 'bg-[#d9c95a]' : i < 12 ? 'bg-[#9fce78]' : 'bg-[#5fc9b0]'}`} />
          ))}
        </div>
      </div>
      <p className="absolute right-[32px] bottom-[30px] z-30 whitespace-nowrap font-['Noto_Sans','Noto_Sans_CJK_SC',sans-serif] text-[49px] leading-[56px] text-white [text-shadow:2px_2px_1px_#000,2px_3px_3px_#000]">
        头条 @一名职业打工人0510
      </p>
    </div>
  );
}
